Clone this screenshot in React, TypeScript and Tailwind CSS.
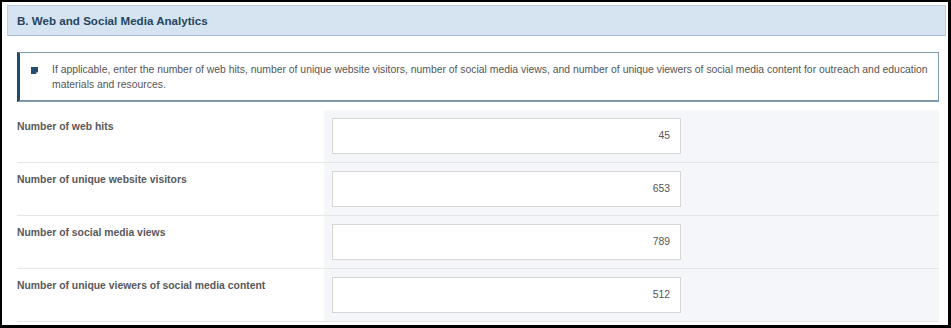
import React from 'react'

const rows = [
  { label: 'Number of web hits', value: '45' },
  { label: 'Number of unique website visitors', value: '653' },
  { label: 'Number of social media views', value: '789' },
  { label: 'Number of unique viewers of social media content', value: '512' },
]

function NoteIcon() {
  return (
    <svg width="7" height="7" viewBox="0 0 7 7" className="shrink-0">
      <path d="M0 0H7V4.5L4.5 7H0Z" fill="#234d73" />
      <path d="M5 5H7L5 7Z" fill="#8aa3b8" />
    </svg>
  )
}

export default function App() {
  return (
    <div
      className="w-[951px] h-[328px] overflow-hidden bg-white border-l-2 border-t-2 border-r-[3px] border-b-[3px] border-black"
      style={{ fontFamily: '"Liberation Sans", Arial, sans-serif' }}
    >
      {/* section header */}
      <div className="mt-[3px] ml-[5px] mr-[2px] h-[31px] flex items-center pl-[9px] bg-[#d5e4f0] border border-[#b9d0e2] border-b-[#9ebbd1]">
        <span className="text-[11.6px] font-bold text-[#26445f]">B. Web and Social Media Analytics</span>
      </div>

      <div className="pl-[15px] pr-[9px]">
        {/* info callout */}
        <div className="mt-[16px] flex items-start border border-[#7f98ab] border-b-2 border-l-[3px] border-l-[#1d4c72] pl-[11px] pr-[6px] pt-[9px] pb-[8px]">
          <div className="pt-[5px]">
            <NoteIcon />
          </div>
          <p className="ml-[14px] text-[10.4px] leading-[15px] text-[#555]">
            If applicable, enter the number of web hits, number of unique website visitors, number of social media views, and number of unique viewers of social media content for outreach and education materials and resources.
          </p>
        </div>

        {/* fields */}
        <div className="mt-[8px]">
          {rows.map((row) => (
            <div key={row.label} className="flex h-[53px] border-b border-[#e6e6e6]">
              <div className="w-[307px] pt-[9px] text-[10.4px] leading-[15px] font-bold text-[#58595b]">
                {row.label}
              </div>
              <div className="flex-1 bg-[#f5f6f9] pt-[8px] pl-[8px]">
                <div className="w-[349px] h-[36px] bg-white border border-[#d6d6d6] flex items-center justify-end pr-[10px] text-[10.4px] text-[#555]">
                  {row.value}
                </div>
              </div>
            </div>
          ))}
        </div>
      </div>
    </div>
  )
}
